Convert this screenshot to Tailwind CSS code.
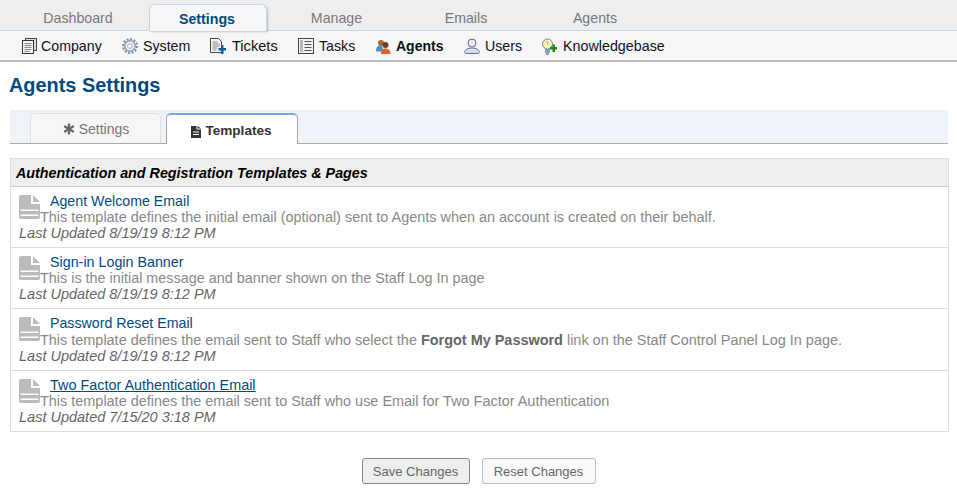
<!DOCTYPE html>
<html lang="en">
<head>
  <meta charset="UTF-8">
  <meta name="viewport" content="width=device-width, initial-scale=1.0">
  <title>Agents Settings</title>
  <script src="https://cdn.jsdelivr.net/npm/@tailwindcss/browser@4"></script>
</head>
<body class="bg-white text-[#333] h-[496px] overflow-hidden font-['Liberation_Sans',Arial,sans-serif] text-[14px]">
  <!-- main nav -->
  <nav class="h-[31px] bg-[#eee] border-b border-[#bcd9f0] flex pl-[4px] text-[14.2px] text-[#777]">
    <a class="w-[148px] pt-[10px] text-center leading-[16px]">Dashboard</a>
    <a class="w-[118px] -ml-[3px] h-[27px] mt-[4px] pt-[6px] pr-[2px] text-center leading-[16px] font-bold text-[#004a80] bg-[#f7f7f7] rounded-t-[6px] border border-b-0 border-[#bcd9f0] shadow-[1px_1px_2px_rgba(0,0,0,0.2)]">Settings</a>
    <a class="w-[139px] pt-[10px] text-center leading-[16px]">Manage</a>
    <a class="w-[120px] pt-[10px] text-center leading-[16px]">Emails</a>
    <a class="w-[138px] pt-[10px] text-center leading-[16px]">Agents</a>
  </nav>
  <!-- sub nav -->
  <nav class="h-[31px] bg-[#f7f7f7] border-b-2 border-[#bbb] flex items-center pl-[22px] pt-[2px] text-[14.2px] text-[#111]">
    <a class="flex items-center gap-[4px] w-[100px]">
      <svg width="15" height="16" viewBox="0 0 15 16"><rect x="3.500" y="0.500" width="11" height="12" fill="#ddd" stroke="#444"/><rect x="0.500" y="2.500" width="11" height="13" fill="#f4f4f4" stroke="#333"/><path d="M2.500 5.500h7M2.500 7.500h7M2.500 9.500h7M2.500 11.500h7M2.500 13.500h5" stroke="#888"/></svg>
      <span>Company</span></a>
    <a class="flex items-center gap-[5px] w-[88px]">
      <svg width="16" height="16" viewBox="0 0 16 16"><circle cx="8" cy="8" r="5.200" fill="#f1f4f8" stroke="#8c9db3" stroke-width="1.500"/><circle cx="8" cy="8" r="2.400" fill="#fff" stroke="#9aa9bc"/><circle cx="8" cy="8" r="7" fill="none" stroke="#7d8ea6" stroke-width="2" stroke-dasharray="2 1.660"/></svg>
      <span>System</span></a>
    <a class="flex items-center gap-[6px] w-[88px]">
      <svg width="16" height="16" viewBox="0 0 16 16"><path d="M0.500 0.500h8l3 3v11h-11z" fill="#f6f6f6" stroke="#444"/><path d="M2.500 4h5M2.500 6h7M2.500 8h7M2.500 10h5M2.500 12h4" stroke="#888"/><path d="M8.500 10H11V7h2.500v3H16v2.500h-2.500V16H11v-3.500H8.500z" fill="#0f5fa8"/></svg>
      <span class="text-[14.600px]">Tickets</span></a>
    <a class="flex items-center gap-[5px] w-[77px]">
      <svg width="16" height="16" viewBox="0 0 16 16"><rect x="0.500" y="0.500" width="15" height="15" fill="#f3f3f3" stroke="#444"/><rect x="2" y="2" width="3" height="12" fill="#bbb"/><path d="M6.500 3.500h7M6.500 6.500h7M6.500 9.500h7M6.500 12.500h7" stroke="#555"/></svg>
      <span>Tasks</span></a>
    <a class="flex items-center gap-[5px] w-[89px] font-bold text-[14px]">
      <svg width="16" height="15" viewBox="0 0 16 15"><circle cx="6" cy="4" r="3" fill="#a06a3c"/><path d="M1 11c0-3 2-4.500 4-4.500s3 1.500 3 4.500v1.500H1z" fill="#4d8fc0"/><circle cx="10.500" cy="6" r="3" fill="#6b4226"/><path d="M6 15c0-4 2-5.500 4.500-5.500S15.500 11 15.500 15z" fill="#e2602a"/></svg>
      <span>Agents</span></a>
    <a class="flex items-center gap-[5px] w-[77px]">
      <svg width="16" height="16" viewBox="0 0 16 16"><circle cx="8" cy="5" r="4" fill="#e8ebef" stroke="#5a7396"/><path d="M0.700 14.500c0-3 3-4.500 7.300-4.500s7.300 1.500 7.300 4.500l-1 1H1.700z" fill="#d8dde4" stroke="#5a7396"/></svg>
      <span>Users</span></a>
    <a class="flex items-center gap-[6px]">
      <svg width="16" height="17" viewBox="0 0 16 17"><circle cx="6.500" cy="6" r="5" fill="#fdf6c0" stroke="#6d86a3"/><path d="M5 4.500c1-1.500 3-.5 2 1l-1 1.500" fill="none" stroke="#e0a800"/><path d="M4 12h5M4 14h5M5 16h3" stroke="#6d86a3" stroke-width="1.300"/><path d="M9 9h2.500V6.500h2.500V9h2v2.500h-2V14h-2.500v-2.500H9z" fill="#1a8a1a"/></svg>
      <span class="text-[14.300px]">Knowledgebase</span></a>
  </nav>

  <main class="px-[10px]">
    <h1 class="-ml-[1px] mt-[11px] text-[19.900px] leading-[24px] font-bold text-[#004a80]">Agents Settings</h1>

    <!-- tabs -->
    <div class="mt-[13px] mr-[-1px] h-[34px] bg-gradient-to-b from-[#eef3fa] to-[#f0f3f8] border-b border-[#aaa] flex items-end pl-[20px] gap-[5px]">
      <a class="w-[131px] h-[30px] pt-[1px] pl-[1px] rounded-t-[5px] border border-b-0 border-[#e0e0e0] bg-[#f6f6f6] flex items-center justify-center gap-[4px] text-[14px] text-[#777]">
        <svg width="12" height="12" viewBox="0 0 12 12"><path d="M4.800 0.500h2.400v3.600l3-2 1.200 2-3.200 1.900 3.200 1.900-1.200 2-3-2v3.600H4.800V7.900l-3 2-1.200-2 3.200-1.900L.6 4.100l1.200-2 3 2z" fill="#666"/></svg>
        <span>Settings</span></a>
      <a class="w-[132px] h-[31px] pt-[4px] pr-[1px] -mb-px rounded-t-[5px] border border-b-0 border-[#aaa] border-t-2 border-t-[#7ba6d4] bg-white flex items-center justify-center gap-[4px] text-[13.600px] font-bold text-[#333]">
        <svg width="10" height="12" viewBox="0 0 10 12"><path d="M0 0h5.500v3.500H10V12H0zM6.500 0 10 2.500H6.500z" fill="#333"/><path d="M2 6h6M2 8.500h6" stroke="#fff"/></svg>
        <span>Templates</span></a>
    </div>

    <!-- template table -->
    <section class="mt-[14px] mr-[-2px] border border-[#ddd] text-[14px] leading-[16px]">
      <h2 class="h-[28px] bg-[#eee] border-b border-[#ccc] pl-[5px] pt-[6px] text-[14.320px] font-bold italic text-[#000]">Authentication and Registration Templates &amp; Pages</h2>

      <div class="h-[61px] border-b border-[#ddd] pl-[8px] pt-[6px] text-[#888]">
        <svg class="float-left mt-[2px]" width="21" height="24" viewBox="0 0 21 24"><path d="M2 0h10v9h9v13a2 2 0 0 1-2 2H2a2 2 0 0 1-2-2V2a2 2 0 0 1 2-2zM14 0l7 7h-7zM1.500 14.500V16h18v-1.500zM1.500 19.500V21h18v-1.500z" fill="#bbb" fill-rule="evenodd"/></svg>
        <a class="ml-[10px] text-[14.200px] text-[#004a80]">Agent Welcome Email</a><br>
        <span class="text-[14.450px]">This template defines the initial email (optional) sent to Agents when an account is created on their behalf.</span><br>
        <em class="text-[14.500px] text-[#666]">Last Updated 8/19/19 8:12 PM</em>
      </div>
      <div class="h-[61px] border-b border-[#ddd] pl-[8px] pt-[6px] text-[#888]">
        <svg class="float-left mt-[2px]" width="21" height="24" viewBox="0 0 21 24"><path d="M2 0h10v9h9v13a2 2 0 0 1-2 2H2a2 2 0 0 1-2-2V2a2 2 0 0 1 2-2zM14 0l7 7h-7zM1.500 14.500V16h18v-1.500zM1.500 19.500V21h18v-1.500z" fill="#bbb" fill-rule="evenodd"/></svg>
        <a class="ml-[10px] text-[14.300px] text-[#004a80]">Sign-in Login Banner</a><br>
        <span class="text-[14.400px]">This is the initial message and banner shown on the Staff Log In page</span><br>
        <em class="text-[14.500px] text-[#666]">Last Updated 8/19/19 8:12 PM</em>
      </div>
      <div class="h-[62px] border-b border-[#ddd] pl-[8px] pt-[6px] text-[#888] leading-[16.500px]">
        <svg class="float-left mt-[2px]" width="21" height="24" viewBox="0 0 21 24"><path d="M2 0h10v9h9v13a2 2 0 0 1-2 2H2a2 2 0 0 1-2-2V2a2 2 0 0 1 2-2zM14 0l7 7h-7zM1.500 14.500V16h18v-1.500zM1.500 19.500V21h18v-1.500z" fill="#bbb" fill-rule="evenodd"/></svg>
        <a class="ml-[10px] text-[14.200px] text-[#004a80]">Password Reset Email</a><br>
        <span class="text-[14.450px]">This template defines the email sent to Staff who select the <b class="text-[#666]">Forgot My Password</b> link on the Staff Control Panel Log In page.</span><br>
        <em class="text-[14.500px] text-[#666]">Last Updated 8/19/19 8:12 PM</em>
      </div>
      <div class="h-[60px] pl-[8px] pt-[6px] text-[#888]">
        <svg class="float-left mt-[2px]" width="21" height="24" viewBox="0 0 21 24"><path d="M2 0h10v9h9v13a2 2 0 0 1-2 2H2a2 2 0 0 1-2-2V2a2 2 0 0 1 2-2zM14 0l7 7h-7zM1.500 14.500V16h18v-1.500zM1.500 19.500V21h18v-1.500z" fill="#bbb" fill-rule="evenodd"/></svg>
        <a class="ml-[10px] text-[14.400px] text-[#004a80] underline">Two Factor Authentication Email</a><br>
        <span class="text-[14.450px]">This template defines the email sent to Staff who use Email for Two Factor Authentication</span><br>
        <em class="text-[14.500px] text-[#666]">Last Updated 7/15/20 3:18 PM</em>
      </div>
    </section>

    <div class="mt-[26px] flex justify-center gap-[12px] text-[13px] text-[#666]">
      <button class="w-[108px] h-[26px] pt-[1px] rounded-[3px] border border-[#888] bg-[#eee]">Save Changes</button>
      <button class="w-[114px] h-[26px] pt-[1px] rounded-[3px] border border-[#bbb] bg-[#f9f9f9]">Reset Changes</button>
    </div>
  </main>
</body>
</html>
